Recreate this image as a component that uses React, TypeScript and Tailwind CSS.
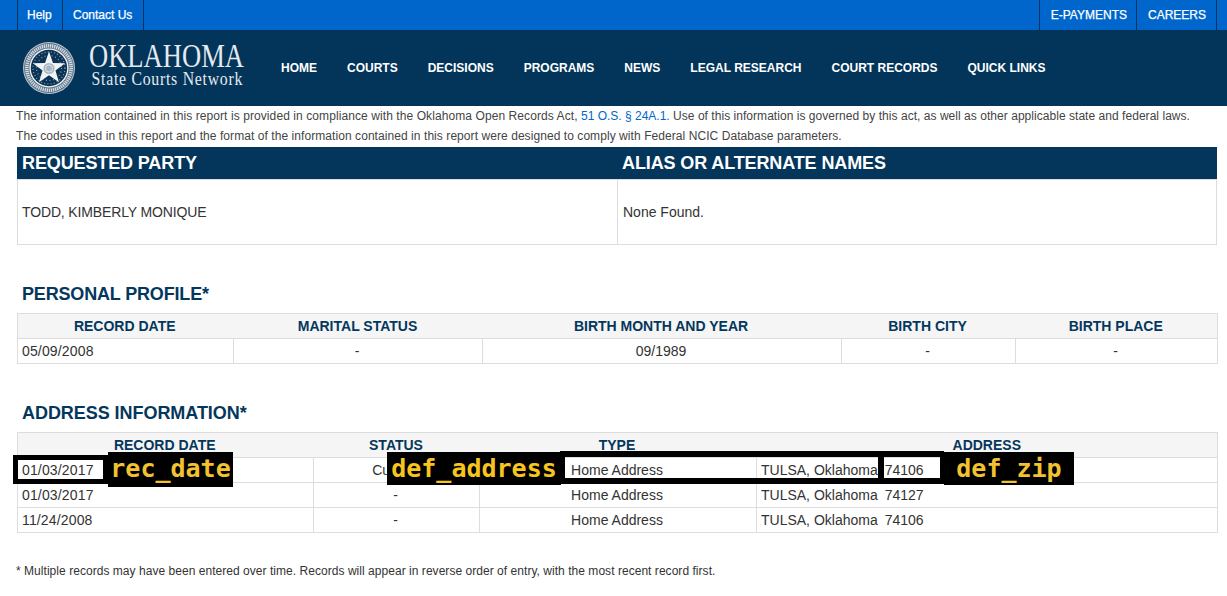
import React from 'react';

const navItems = ['HOME', 'COURTS', 'DECISIONS', 'PROGRAMS', 'NEWS', 'LEGAL RESEARCH', 'COURT RECORDS', 'QUICK LINKS'];

const addressRows = [
    { date: '01/03/2017', status: 'Current', city: 'TULSA, Oklahoma', zip: '74106' },
    { date: '01/03/2017', status: '-', city: 'TULSA, Oklahoma', zip: '74127' },
    { date: '11/24/2008', status: '-', city: 'TULSA, Oklahoma', zip: '74106' },
];

const starPoints = (() => {
    const pts: string[] = [];
    for (let i = 0; i < 10; i++) {
        const r = i % 2 === 0 ? 17 : 6.8;
        const a = -Math.PI / 2 + (i * Math.PI) / 5;
        pts.push(`${(26 + Math.cos(a) * r).toFixed(2)},${(26.5 + Math.sin(a) * r).toFixed(2)}`);
    }
    return pts.join(' ');
})();

const Seal: React.FC = () => (
    <svg width="52" height="52" viewBox="0 0 52 52" className="shrink-0">
        <circle cx="26" cy="26" r="26" fill="#b9c4cd" />
        <circle cx="26" cy="26" r="25" fill="#5c7489" />
        <circle cx="26" cy="26" r="22.2" fill="none" stroke="#d5dce2" strokeWidth="3.6" strokeDasharray="1.3 0.8" />
        <circle cx="26" cy="26" r="19.6" fill="#eef1f3" />
        <circle cx="26" cy="26" r="18.2" fill="#0b3355" />
        <circle cx="26" cy="26" r="16" fill="none" stroke="#8fa3b4" strokeWidth="1.2" strokeDasharray="1 2.2" />
        <circle cx="26" cy="26" r="12.5" fill="none" stroke="#8fa3b4" strokeWidth="1.2" strokeDasharray="1 2.6" />
        <polygon points={starPoints} fill="#f1f3f5" />
        <circle cx="26" cy="26.5" r="5.6" fill="#a9b6c2" />
        <circle cx="26" cy="26.5" r="3.6" fill="none" stroke="#e2e7eb" strokeWidth="0.9" />
    </svg>
);

const Logo: React.FC = () => (
    <div className="flex items-center gap-[14px]">
        <Seal />
        <div className="w-[157px] mb-[6px] text-[#e6eaee] font-['Liberation_Serif',serif]">
            <div className="text-[33px] leading-[28px] h-[28px] whitespace-nowrap origin-left scale-x-[0.805]">OKLAHOMA</div>
            <div className="text-[19px] leading-[18px] h-[18px] whitespace-nowrap pl-[3px] tracking-[0.9px] origin-left scale-x-[0.83]">State Courts Network</div>
        </div>
    </div>
);

const Th: React.FC<{ children: React.ReactNode; className?: string }> = ({ children, className }) => (
    <th className={`h-[25px] p-0 text-center align-middle font-bold text-[14px] leading-[18px] text-[#04375c] ${className ?? 'pr-[2px]'}`}>{children}</th>
);

const Td: React.FC<{ children: React.ReactNode; className?: string }> = ({ children, className }) => (
    <td className={`h-[25px] p-0 border border-[#dddddd] align-middle text-[14px] leading-[18px] text-[#333333] ${className ?? ''}`}>{children}</td>
);

const App: React.FC = () => {
    return (
        <div className="w-[1227px] h-[596px] overflow-hidden bg-white font-['Liberation_Sans',Arial,sans-serif]">
            <div className="h-[30px] bg-[#0066cc] flex justify-between pl-[17px] pr-[10px] text-white text-[12px] [-webkit-text-stroke:0.25px_white]">
                <div className="flex">
                    <a className="flex items-center w-[46px] pl-[9px] border-x border-[#03355a]">Help</a>
                    <a className="flex items-center w-[81px] pl-[10px] border-r border-[#03355a]">Contact Us</a>
                </div>
                <div className="flex">
                    <a className="flex items-center pl-[11px] pr-[9px] border-x border-[#03355a]">E-PAYMENTS</a>
                    <a className="flex items-center pl-[11px] pr-[10px] border-r border-[#03355a]">CAREERS</a>
                </div>
            </div>
            <header className="h-[76px] bg-[#03355a] flex items-center pl-[23px]">
                <Logo />
                <nav className="ml-[35px] flex gap-[30px] text-white text-[12px] font-bold">
                    {navItems.map((item) => (
                        <a key={item} className="whitespace-nowrap">{item}</a>
                    ))}
                </nav>
            </header>
            <main className="px-[16px] text-[#444444] text-[12px]">
                <p className="h-[20px] leading-[20px] whitespace-nowrap">
                    <span className="tracking-[0.085px]">The information contained in this report is provided in compliance with the Oklahoma Open Records Act,</span>{' '}
                    <a className="text-[#0066cc]">51 O.S. § 24A.1.</a>{' '}
                    <span className="tracking-[0.04px]">Use of this information is governed by this act, as well as other applicable state and federal laws.</span>
                </p>
                <p className="h-[20px] leading-[20px] tracking-[0.066px] whitespace-nowrap">
                    The codes used in this report and the format of the information contained in this report were designed to comply with Federal NCIC Database parameters.
                </p>
                <div className="ml-[1px] mt-[1px] w-[1200px] border-x border-b border-[#dddddd]">
                    <div className="h-[32px] -mx-[1px] bg-[#04365b] grid grid-cols-[600px_1fr] text-white text-[18px] font-bold items-center tracking-[-0.12px] pt-[1px]">
                        <div className="pl-[5px]">REQUESTED PARTY</div>
                        <div className="pl-[5px]">ALIAS OR ALTERNATE NAMES</div>
                    </div>
                    <div className="h-[65px] border-t border-[#dddddd] grid grid-cols-[600px_1fr] text-[14px] text-[#333333] items-center">
                        <div className="h-full flex items-center pl-[4px] border-r border-[#dddddd] tracking-[-0.14px]">TODD, KIMBERLY MONIQUE</div>
                        <div className="pl-[5px]">None Found.</div>
                    </div>
                </div>

                <h2 className="mt-[38px] ml-[6px] h-[22px] leading-[22px] text-[18px] font-bold text-[#04375c] tracking-[-0.17px]">PERSONAL PROFILE*</h2>
                <table className="mt-[8px] ml-[1px] w-[1200px] table-fixed border-collapse">
                    <colgroup>
                        <col className="w-[216px]" />
                        <col className="w-[249px]" />
                        <col className="w-[359px]" />
                        <col className="w-[174px]" />
                        <col className="w-[202px]" />
                    </colgroup>
                    <thead>
                        <tr className="bg-[#f5f5f5] border border-[#dddddd]">
                            <Th>RECORD DATE</Th>
                            <Th className="pr-[1px]">MARITAL STATUS</Th>
                            <Th>BIRTH MONTH AND YEAR</Th>
                            <Th>BIRTH CITY</Th>
                            <Th className="pr-[1px]">BIRTH PLACE</Th>
                        </tr>
                    </thead>
                    <tbody>
                        <tr>
                            <Td className="pl-[4px] tracking-[0.15px]">05/09/2008</Td>
                            <Td className="text-center pr-[2px]">-</Td>
                            <Td className="text-center pr-[2px]">09/1989</Td>
                            <Td className="text-center pr-[2px]">-</Td>
                            <Td className="text-center pr-[2px]">-</Td>
                        </tr>
                    </tbody>
                </table>

                <h2 className="mt-[38px] ml-[6px] h-[22px] leading-[22px] text-[18px] font-bold text-[#04375c] tracking-[-0.05px]">ADDRESS INFORMATION*</h2>
                <div className="relative mt-[8px] ml-[1px] w-[1200px]">
                    <table className="w-full table-fixed border-collapse">
                        <colgroup>
                            <col className="w-[296px]" />
                            <col className="w-[166px]" />
                            <col className="w-[277px]" />
                            <col className="w-[461px]" />
                        </colgroup>
                        <thead>
                            <tr className="bg-[#f5f5f5] border border-[#dddddd]">
                                <Th>RECORD DATE</Th>
                                <Th className="pr-[1px]">STATUS</Th>
                                <Th>TYPE</Th>
                                <Th className="pr-0">ADDRESS</Th>
                            </tr>
                        </thead>
                        <tbody>
                            {addressRows.map((row, i) => (
                                <tr key={i}>
                                    <Td className="pl-[4px] tracking-[0.15px]">{row.date}</Td>
                                    <Td className="text-center pr-[2px]">{row.status}</Td>
                                    <Td className="text-center pr-[2px]">Home Address</Td>
                                    <Td className="pl-[4px]">
                                        <span>{row.city}</span>
                                        <span className="ml-[7px]">{row.zip}</span>
                                    </Td>
                                </tr>
                            ))}
                        </tbody>
                    </table>
                    {/* annotation boxes over the first data row */}
                    <div className="absolute left-[-4px] top-[23px] w-[95px] h-[29px] border-[5px] border-black" />
                    <div className="absolute left-[91px] top-[20px] w-[125px] h-[35px] bg-black text-[#f2c230] font-['DejaVu_Sans_Mono',monospace] font-bold text-[25px] leading-[33px] text-center">rec_date</div>
                    <div className="absolute left-[370px] top-[20px] w-[174px] h-[33px] bg-black text-[#f8c51c] font-['DejaVu_Sans_Mono',monospace] font-bold text-[25px] leading-[33px] text-center">def_address</div>
                    <div className="absolute left-[543px] top-[19px] w-[319px] h-[33px] border-y-[6px] border-l-[5px] border-black" />
                    <div className="absolute left-[861px] top-[19px] w-[66px] h-[33px] border-y-[6px] border-l-[6px] border-r-[4px] border-black" />
                    <div className="absolute left-[927px] top-[20px] w-[130px] h-[33px] bg-black text-[#f2c230] font-['DejaVu_Sans_Mono',monospace] font-bold text-[25px] leading-[33px] text-center">def_zip</div>
                </div>
                <p className="mt-[30px] text-[#333333] text-[12px] leading-[16px] tracking-[0.04px]">
                    * Multiple records may have been entered over time. Records will appear in reverse order of entry, with the most recent record first.
                </p>
            </main>
        </div>
    );
};

export default App;
